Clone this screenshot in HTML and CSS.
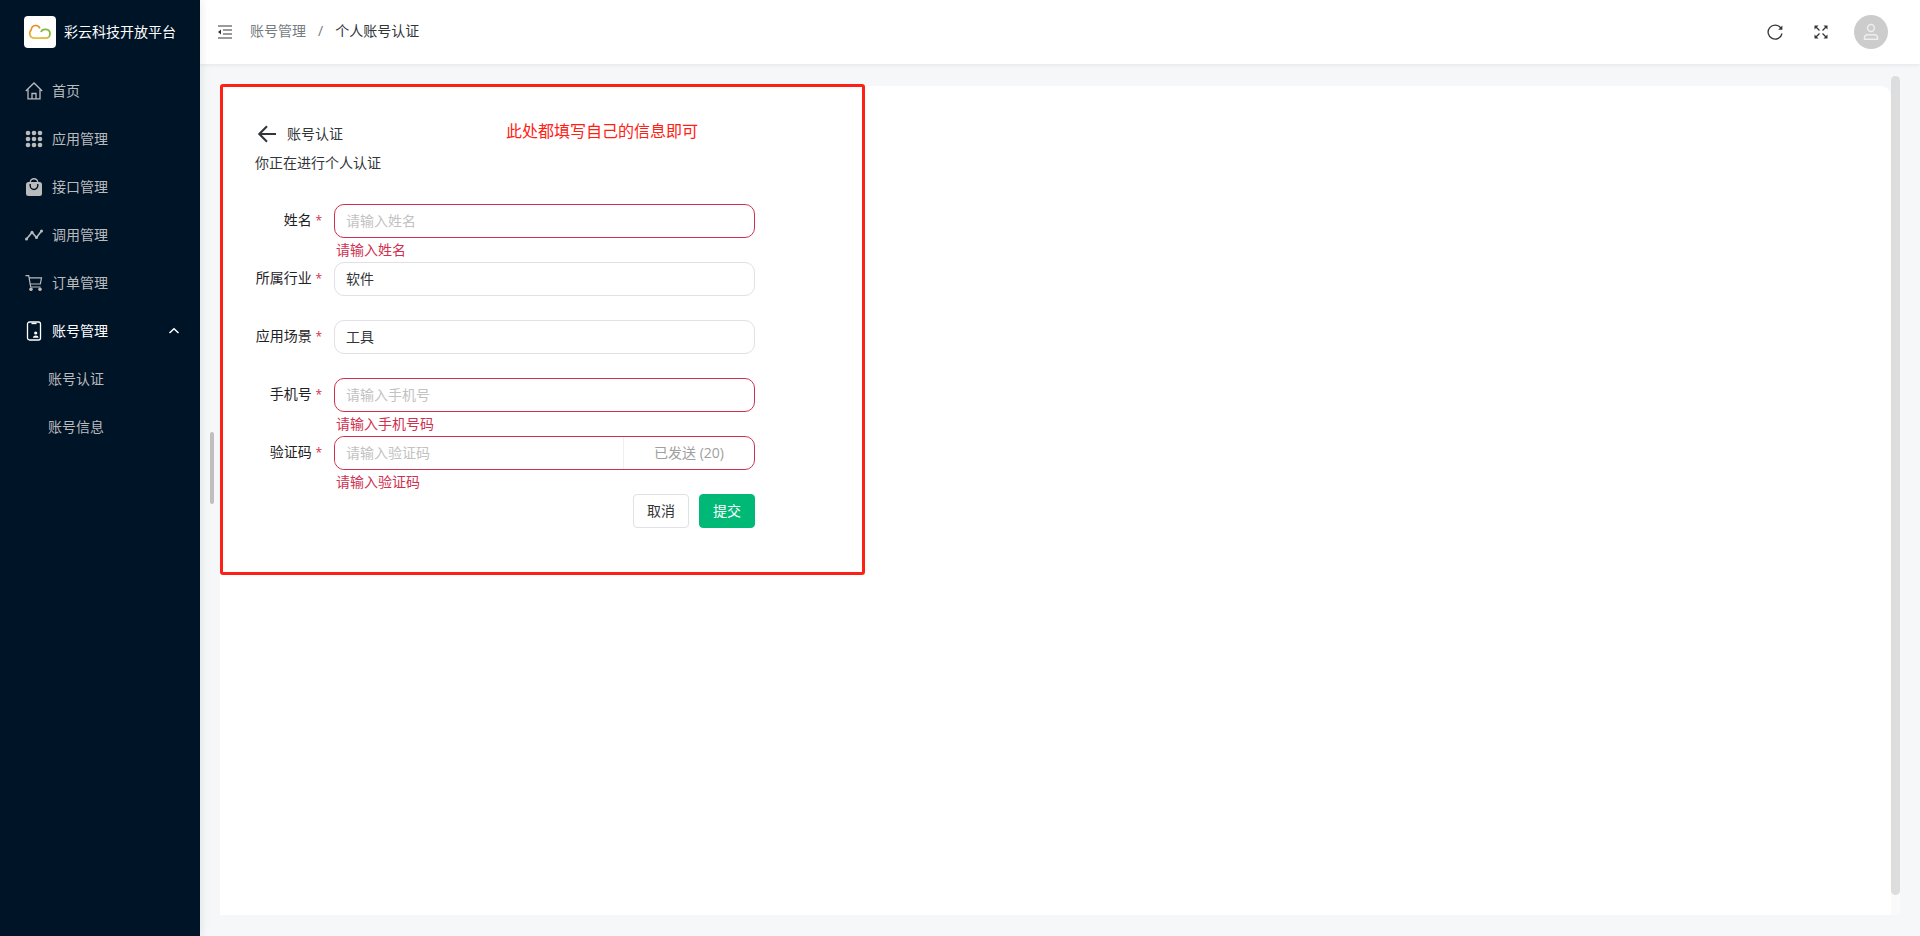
FILE: index.html
```html
<!DOCTYPE html>
<html lang="zh-CN">
<head>
    <meta charset="UTF-8">
    <meta name="viewport" content="width=device-width, initial-scale=1.0">
    <title>个人账号认证</title>
    <link rel="stylesheet" href="styles.css">
</head>
<body>
    <div class="layout">
        <aside class="sidebar">
            <div class="brand">
                <svg class="brand-logo" viewBox="0 0 32 32" fill="none" stroke-width="1.7">
                    <defs>
                        <linearGradient id="cloud" x1="0" y1="0" x2="0" y2="1">
                            <stop offset="0" stop-color="#e8861c"/>
                            <stop offset="1" stop-color="#e9bd3a"/>
                        </linearGradient>
                        <linearGradient id="cloud-right" x1="0" y1="0" x2="0" y2="1">
                            <stop offset="0.6" stop-color="#7fb93c"/>
                            <stop offset="1" stop-color="#dcbc3c"/>
                        </linearGradient>
                    </defs>
                    <rect width="32" height="32" rx="4" fill="#fff"/>
                    <path d="M15.800 12.500C14.500 8.300 8 8.300 7.200 13.800C4.500 16.500 5.500 22 10.500 22.200H18" stroke="url(#cloud)"/>
                    <path d="M17 16C18 12.300 26 12 26 17.500C26 20.500 24 22.200 21.500 22.200H17.500" stroke="url(#cloud-right)"/>
                </svg>
                <span>彩云科技开放平台</span>
            </div>
            <nav class="menu">
                <a href="#" class="menu-item">
                    <svg class="icon" viewBox="0 0 18 18" fill="none" stroke="currentColor" stroke-width="1.3">
                        <path d="M.8 9L9 1l8.200 8M3 7.500v9.300h12V7.500M7 16.800v-5.300h4v5.300"/>
                    </svg>
                    <span>首页</span>
                </a>
                <a href="#" class="menu-item">
                    <svg class="icon" viewBox="0 0 18 18" fill="currentColor">
                        <circle cx="3" cy="3" r="2.300"/><circle cx="9" cy="3" r="2.300"/><circle cx="15" cy="3" r="2.300"/>
                        <circle cx="3" cy="9" r="2.300"/><circle cx="9" cy="9" r="2.300"/><circle cx="15" cy="9" r="2.300"/>
                        <circle cx="3" cy="15" r="2.300"/><circle cx="9" cy="15" r="2.300"/><circle cx="15" cy="15" r="2.300"/>
                    </svg>
                    <span>应用管理</span>
                </a>
                <a href="#" class="menu-item">
                    <svg class="icon" viewBox="0 0 18 18">
                        <rect x="1" y="4" width="16" height="14" rx="2.500" fill="currentColor"/>
                        <path d="M5.200 4.500a3.800 3.800 0 0 1 7.600 0" fill="none" stroke="currentColor" stroke-width="1.4"/>
                        <path d="M5.200 6v1.500a3.800 4 0 0 0 7.600 0V6" fill="none" stroke="#001428" stroke-width="1.4"/>
                    </svg>
                    <span>接口管理</span>
                </a>
                <a href="#" class="menu-item">
                    <svg class="icon" viewBox="0 0 18 18" fill="currentColor">
                        <path d="M1.500 13L7 6.500l4.500 5L16.500 5" fill="none" stroke="currentColor" stroke-width="1.6"/>
                        <circle cx="1.500" cy="13" r="1.500"/><circle cx="7" cy="6.300" r="1.500"/>
                        <circle cx="11.500" cy="11.500" r="1.500"/><circle cx="16.500" cy="5" r="1.500"/>
                    </svg>
                    <span>调用管理</span>
                </a>
                <a href="#" class="menu-item">
                    <svg class="icon" viewBox="0 0 18 18" fill="none" stroke="currentColor" stroke-width="1.2">
                        <path d="M.5 1.700h3.200l2 11.300h9.800M4 3.800h12.500L15.300 10H5.200"/>
                        <circle cx="6" cy="15.300" r="1.200" fill="currentColor"/><circle cx="15" cy="15.300" r="1.200" fill="currentColor"/>
                    </svg>
                    <span>订单管理</span>
                </a>
                <a href="#" class="menu-item active">
                    <svg class="icon" viewBox="0 0 18 18" fill="none" stroke="currentColor" stroke-width="1.3">
                        <rect x="2.500" y="0" width="13" height="18" rx="2"/>
                        <path d="M6.500 1.500h5"/>
                        <circle cx="10.700" cy="11" r="1.600" fill="currentColor" stroke="none"/>
                        <path d="M7.800 15.700a3 2.600 0 0 1 5.900 0z" fill="currentColor" stroke="none"/>
                    </svg>
                    <span>账号管理</span>
                    <svg class="arrow" viewBox="0 0 10 10" fill="none" stroke="currentColor" stroke-width="1.5">
                        <path d="M.5 7L5 2.700 9.500 7"/>
                    </svg>
                </a>
                <a href="#" class="menu-item sub">账号认证</a>
                <a href="#" class="menu-item sub">账号信息</a>
            </nav>
        </aside>

        <div class="page">
            <header class="header">
                <button class="icon-btn" type="button" aria-label="收起菜单">
                    <svg width="14" height="14" viewBox="0 0 14 14">
                        <path d="M0 1h14M5 5h9M5 9h9M0 13h14" stroke="currentColor" stroke-width="1.2"/>
                        <path d="M3 4.500v5L0 7z" fill="currentColor"/>
                    </svg>
                </button>
                <div class="breadcrumb">
                    <a href="#">账号管理</a>
                    <span>/</span>
                    <span class="current">个人账号认证</span>
                </div>
                <div class="tools">
                    <button class="icon-btn" type="button" aria-label="刷新">
                        <svg width="16" height="16" viewBox="0 0 16 16">
                            <path d="M13.800 4A7 7 0 1 0 15 9.500" fill="none" stroke="currentColor" stroke-width="1.3"/>
                            <path d="M15.400 1.500v4.300h-4.200z" fill="currentColor"/>
                        </svg>
                    </button>
                    <button class="icon-btn" type="button" aria-label="全屏">
                        <svg width="14" height="14" viewBox="0 0 14 14">
                            <path d="M1.500 1.500l4 4M12.500 1.500l-4 4M1.500 12.500l4-4M12.500 12.500l-4-4" stroke="currentColor" stroke-width="1.3"/>
                            <path d="M.5.5h4l-4 4zM13.500.5h-4l4 4zM.5 13.500h4l-4-4zM13.500 13.500h-4l4-4z" fill="currentColor"/>
                        </svg>
                    </button>
                    <button class="avatar" type="button" aria-label="用户">
                        <svg width="16" height="18" viewBox="0 0 16 18" fill="none" stroke="currentColor" stroke-width="1.5">
                            <circle cx="8" cy="5" r="3.400"/>
                            <path d="M1.500 16.200v-1.400q0-3 3.500-3h6q3.500 0 3.500 3v1.400z"/>
                        </svg>
                    </button>
                </div>
            </header>

            <main class="content">
                <div class="resize-bar"></div>
                <section class="card">
                    <div class="card-title">
                        <button class="icon-btn" type="button" aria-label="返回">
                            <svg width="18" height="18" viewBox="0 0 18 18" fill="none" stroke="currentColor" stroke-width="2.1">
                                <path d="M18 9H1.500M9 1.300L1.300 9 9 16.700"/>
                            </svg>
                        </button>
                        <span>账号认证</span>
                    </div>
                    <p class="card-desc">你正在进行个人认证</p>

                    <form class="form">
                        <div class="form-item">
                            <label for="name">姓名 <i>*</i></label>
                            <div class="field">
                                <input class="error" type="text" id="name" placeholder="请输入姓名">
                                <div class="feedback">请输入姓名</div>
                            </div>
                        </div>
                        <div class="form-item">
                            <label for="industry">所属行业 <i>*</i></label>
                            <div class="field">
                                <input type="text" id="industry" value="软件">
                            </div>
                        </div>
                        <div class="form-item">
                            <label for="scene">应用场景 <i>*</i></label>
                            <div class="field">
                                <input type="text" id="scene" value="工具">
                            </div>
                        </div>
                        <div class="form-item">
                            <label for="phone">手机号 <i>*</i></label>
                            <div class="field">
                                <input class="error" type="text" id="phone" placeholder="请输入手机号">
                                <div class="feedback">请输入手机号码</div>
                            </div>
                        </div>
                        <div class="form-item">
                            <label for="code">验证码 <i>*</i></label>
                            <div class="field">
                                <div class="code-group">
                                    <input type="text" id="code" placeholder="请输入验证码">
                                    <button type="button" disabled>已发送 (20)</button>
                                </div>
                                <div class="feedback">请输入验证码</div>
                            </div>
                        </div>
                        <div class="buttons">
                            <button type="button">取消</button>
                            <button type="submit" class="primary">提交</button>
                        </div>
                    </form>
                </section>
                <div class="scroll-track"><div class="scroll-thumb"></div></div>
                <div class="callout">此处都填写自己的信息即可</div>
            </main>
        </div>
    </div>
</body>
</html>
```
FILE: styles.css
```css
* {
    box-sizing: border-box;
}
body {
    margin: 0;
    font-family: "Open Sans", "Noto Sans CJK SC", sans-serif;
    font-size: 14px;
    line-height: 22px;
    color: #333639;
    background-color: #f5f7f9;
}
a {
    color: inherit;
    text-decoration: none;
}
button,
input {
    font: inherit;
    color: inherit;
}
svg {
    display: block;
    overflow: visible;
}
.layout {
    display: flex;
    min-height: 100vh;
}

/* sidebar */
.sidebar {
    position: relative;
    z-index: 2;
    flex: 0 0 200px;
    background-color: #001428;
    color: #bbb;
    box-shadow: 2px 0 8px rgba(29, 35, 41, 0.08);
}
.brand {
    display: flex;
    align-items: center;
    gap: 8px;
    height: 64px;
    padding-left: 24px;
    color: #fff;
}
.brand-logo {
    width: 32px;
    height: 32px;
}
.menu {
    padding-top: 3px;
}
.menu-item {
    display: flex;
    align-items: center;
    gap: 9px;
    height: 48px;
    padding: 0 21px 0 25px;
}
.menu-item.active {
    color: #fff;
}
.menu-item.sub {
    padding-left: 48px;
}
.icon {
    width: 18px;
    height: 18px;
}
.arrow {
    width: 10px;
    height: 10px;
    margin-left: auto;
}

/* header */
.page {
    display: flex;
    flex: 1;
    flex-direction: column;
}
.header {
    position: relative;
    z-index: 1;
    display: flex;
    align-items: center;
    height: 64px;
    padding: 0 32px 0 18px;
    background-color: #fff;
    box-shadow: 0 1px 4px rgba(0, 21, 41, 0.08);
}
.icon-btn {
    padding: 0;
    border: none;
    background: none;
    cursor: pointer;
}
.breadcrumb {
    display: flex;
    gap: 12px;
    margin-left: 18px;
    padding-bottom: 2px;
    color: #767c82;
}
.breadcrumb .current {
    color: #333639;
}
.tools {
    display: flex;
    align-items: center;
    gap: 31px;
    margin-left: auto;
}
.avatar {
    display: flex;
    align-items: center;
    justify-content: center;
    width: 34px;
    height: 34px;
    padding: 0;
    border: none;
    border-radius: 50%;
    background-color: #ccc;
    color: #eee;
    cursor: pointer;
}
.tools .avatar {
    margin-left: -5px;
}

/* content */
.content {
    position: relative;
    display: flex;
    flex: 1;
    padding: 12px 20px 21px;
}
.card {
    flex: 1;
    margin-top: 10px;
    padding: 37px 35px;
    border-radius: 10px 10px 0 0;
    background-color: #fff;
}
.card-title {
    display: flex;
    align-items: center;
    gap: 11px;
    padding-left: 3px;
}
.card-desc {
    margin: 7px 0 30px;
}
.form {
    width: 500px;
}
.form-item {
    display: flex;
    gap: 12px;
    height: 58px;
}
.form-item label {
    width: 67px;
    line-height: 32px;
    text-align: right;
    white-space: nowrap;
    color: #1f2225;
}
.form-item label i {
    font-size: 12px;
    font-style: normal;
    color: #d03050;
}
.field {
    flex: 1;
}
.field input {
    display: block;
    width: 100%;
    height: 34px;
    padding: 0 11px 2px;
    border: 1px solid #e0e0e6;
    border-radius: 10px;
    outline: none;
    background-color: #fff;
}
.field input::placeholder {
    color: #c2c2c2;
}
.field input.error,
.code-group {
    border: 1px solid #d03050;
}
.code-group {
    display: flex;
    height: 34px;
    border-radius: 10px;
}
.code-group input {
    flex: 1;
    width: auto;
    height: 32px;
    border: none;
}
.code-group button {
    width: 131px;
    border: none;
    border-left: 1px solid #f0f0f4;
    background: none;
    color: #a0a0a0;
}
.feedback {
    padding-left: 2px;
    line-height: 24px;
    color: #d03050;
}
.buttons {
    display: flex;
    justify-content: flex-end;
    gap: 10px;
}
.buttons button {
    width: 56px;
    height: 34px;
    padding: 0;
    border: 1px solid #e0e0e6;
    border-radius: 4px;
    background-color: #fff;
    cursor: pointer;
}
.buttons .primary {
    border-color: #00b977;
    background-color: #00b977;
    color: #fff;
}
.resize-bar {
    position: absolute;
    top: 368px;
    left: 10px;
    width: 4px;
    height: 72px;
    border-radius: 2px;
    background-color: #bfbfbf;
}
.scroll-track {
    width: 9px;
    background-color: #fafafa;
    border-radius: 5px 5px 0 0;
}
.scroll-thumb {
    height: calc(100% - 20px);
    border-radius: 5px;
    background-color: #ddd;
}

/* red note over the form */
.callout {
    position: absolute;
    top: 20px;
    left: 20px;
    width: 645px;
    height: 491px;
    padding: 32px 0 0 283px;
    border: 3px solid #ff2015;
    border-radius: 3px;
    font-size: 16px;
    line-height: 24px;
    color: #ff2015;
    pointer-events: none;
}
```
